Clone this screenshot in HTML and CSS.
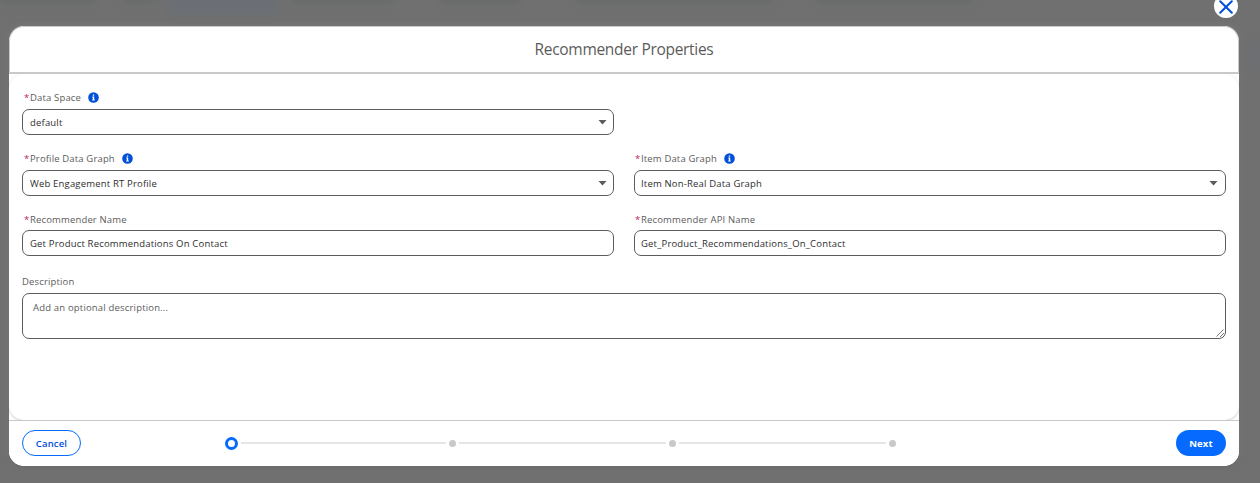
FILE: index.html
```html
<!DOCTYPE html>
<html lang="en">
<head>
<meta charset="utf-8">
<title>Recommender Properties</title>
<link rel="stylesheet" href="styles.css">
</head>
<body>
<div class="page">
  <div class="backdrop"><i class="tab tab-a"></i><i class="tab tab-b"></i><i class="tab tab-c"></i><i class="tab tab-d"></i><i class="tab tab-e"></i><i class="tab tab-f"></i><i class="tab tab-g"></i><i class="side"></i></div>
  <button class="close" aria-label="Close"><svg width="14" height="14" viewBox="0 0 14 14"><path d="M1.2 1.2 12.8 12.8M12.8 1.2 1.2 12.8"/></svg></button>
  <section class="modal">
    <header class="modal-header"><h1 class="title">Recommender Properties</h1></header>
    <main class="modal-body">
      <div class="grid">
        <div class="field">
          <div class="label"><span class="req">*</span><span>Data Space</span><svg class="info" width="11" height="11" viewBox="0 0 11 11"><circle cx="5.5" cy="5.5" r="5.3"/><path d="M4.8 2.4h1.4v1.3H4.8zM4.3 4.5h1.9v3h.6v.9H4.2v-.9h.6V5.4h-.5z"/></svg></div>
          <div class="box"><span>default</span><i class="caret"></i></div>
        </div>
        <div></div>
        <div class="field">
          <div class="label"><span class="req">*</span><span>Profile Data Graph</span><svg class="info" width="11" height="11" viewBox="0 0 11 11"><circle cx="5.5" cy="5.5" r="5.3"/><path d="M4.8 2.4h1.4v1.3H4.8zM4.3 4.5h1.9v3h.6v.9H4.2v-.9h.6V5.4h-.5z"/></svg></div>
          <div class="box"><span>Web Engagement RT Profile</span><i class="caret"></i></div>
        </div>
        <div class="field right">
          <div class="label"><span class="req">*</span><span>Item Data Graph</span><svg class="info" width="11" height="11" viewBox="0 0 11 11"><circle cx="5.5" cy="5.5" r="5.3"/><path d="M4.8 2.4h1.4v1.3H4.8zM4.3 4.5h1.9v3h.6v.9H4.2v-.9h.6V5.4h-.5z"/></svg></div>
          <div class="box"><span>Item Non-Real Data Graph</span><i class="caret"></i></div>
        </div>
        <div class="field short">
          <div class="label"><span class="req">*</span><span>Recommender Name</span></div>
          <div class="box"><span>Get Product Recommendations On Contact</span></div>
        </div>
        <div class="field short right">
          <div class="label"><span class="req">*</span><span>Recommender API Name</span></div>
          <div class="box"><span>Get_Product_Recommendations_On_Contact</span></div>
        </div>
      </div>
      <div class="description">
        <div class="label"><span>Description</span></div>
        <div class="box area"><span>Add an optional description...</span><svg class="grip" width="9" height="9" viewBox="0 0 9 9"><path d="M.5 7.5 7.5.5M4 8 8 4M6.5 8.5 8.5 6.5"/></svg></div>
      </div>
    </main>
    <footer class="modal-footer">
      <button class="btn cancel">Cancel</button>
      <div class="progress"><i class="step active"></i><i class="line first"></i><i class="step"></i><i class="line"></i><i class="step"></i><i class="line"></i><i class="step"></i></div>
      <button class="btn next">Next</button>
    </footer>
  </section>
</div>
</body>
</html>
```
FILE: styles.css
```css
* { box-sizing: border-box; }
body { margin: 0; font-family: "Open Sans", "Noto Sans", sans-serif; font-size: 9.5px; letter-spacing: .18px; color: #2e2e2e; }
.page { position: relative; width: 1260px; height: 483px; padding: 26px 21px 17px 9px; background: #707070; overflow: hidden; }
.backdrop { position: absolute; inset: 0; }
.tab { position: absolute; top: -5px; height: 8px; background: #676a6a; filter: blur(3px); }
.tab-a { left: 0; width: 95px; }
.tab-b { left: 125px; width: 28px; }
.tab-c { left: 167px; width: 112px; height: 20px; background: #6b6e74; }
.tab-d { left: 293px; width: 100px; }
.tab-e { left: 440px; width: 80px; }
.tab-f { left: 578px; width: 195px; }
.tab-g { left: 818px; width: 155px; }
.side { position: absolute; left: 1246px; top: 46px; width: 14px; height: 20px; background: #6b6e72; filter: blur(4px); }
.close { position: absolute; left: 1214px; top: -6px; width: 24px; height: 24px; padding: 1px 0 0; border: 0; border-radius: 50%; background: #fff; display: flex; align-items: center; justify-content: center; }
.close svg { fill: none; stroke: #0250d9; stroke-width: 2; stroke-linecap: round; }
.modal { position: relative; display: flex; flex-direction: column; width: 1230px; height: 440px; border-radius: 15px; background: #fff; overflow: hidden; box-shadow: 0 0 6px #7b7b7b, 0 2px 3px #626262; }
.modal-header { flex: 0 0 48px; display: flex; align-items: center; justify-content: center; padding-bottom: 2px; border: 1px solid #c9c9c9; border-bottom-width: 2px; border-radius: 15px 15px 0 0; }
.title { margin: 0; font-size: 15.5px; line-height: 20px; font-weight: 400; letter-spacing: -.3px; color: #5c5c5c; white-space: nowrap; }
.modal-body { flex: 0 0 346px; padding: 16px 13px 0; border-radius: 15px; box-shadow: 0 1px 3px #ccc; }
.grid { display: grid; grid-template-columns: 592px 592px; column-gap: 20px; grid-template-rows: 61px 61px 60px; }
.label { display: flex; align-items: center; height: 15px; margin-bottom: 4px; color: #5c5c5c; letter-spacing: .15px; white-space: nowrap; }
.short .label { margin-bottom: 3px; }
.req { width: 8px; padding-left: 2px; color: #c2185b; }
.right .req { width: 7px; padding-left: 1px; }
.info { margin-left: 7px; }
.info circle { fill: #0250d9; }
.info path { fill: #fff; }
.box { display: flex; align-items: center; justify-content: space-between; height: 26px; padding: 0 6px 0 7px; border: 1px solid #5c5c5c; border-radius: 7px; white-space: nowrap; }
.right .box { padding: 0 7px 0 6px; }
.caret { width: 9px; height: 5px; background: #5c5c5c; clip-path: polygon(0 0, 100% 0, 50% 100%); }
.description { padding-top: 2px; }
.area { position: relative; height: 46px; align-items: flex-start; padding: 7px 10px; color: #5c5c5c; }
.grip { position: absolute; right: 0; bottom: 0; fill: none; stroke: #555; stroke-width: .8; }
.modal-footer { display: flex; align-items: flex-start; justify-content: space-between; flex: 0 0 46px; padding: 9px 13px 0; border-top: 1px solid #c9c9c9; background: #fff; }
.btn { height: 26px; padding: 0; border-radius: 13px; font: 600 9.5px "Open Sans", sans-serif; letter-spacing: .15px; }
.cancel { width: 59px; border: 1px solid #066afe; color: #0250d9; background: #fff; }
.next { width: 50px; border: 0; background: #066afe; color: #fff; font-weight: 700; }
.progress { display: flex; align-items: center; width: 671px; height: 27px; margin-right: 136px; }
.step { flex: 0 0 7px; height: 7px; border-radius: 50%; background: #c9c9c9; }
.active { flex-basis: 13px; height: 13px; border: 3px solid #066afe; background: #fff; }
.line { flex: 1; height: 2px; margin: 0 3px 1px; background: #e5e5e5; }
.first { flex: 0 0 205px; }
```
